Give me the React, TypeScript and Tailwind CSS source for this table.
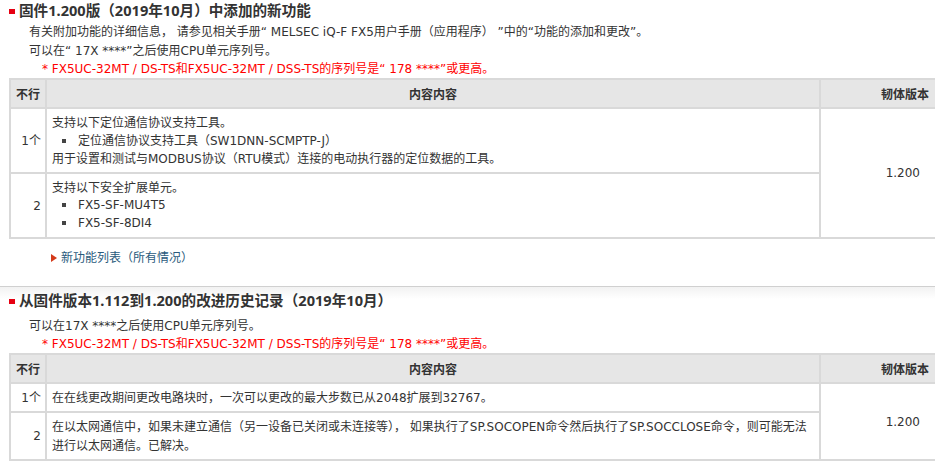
import React from "react";

const font = { fontFamily: '"DejaVu Sans", "Noto Sans CJK SC", sans-serif' };
const cjk = { fontFamily: '"Noto Sans CJK SC", sans-serif' };
const headFont = { fontFamily: '"Noto Sans", "Noto Sans CJK SC", sans-serif' };

function Heading({ children }: { children: React.ReactNode }) {
  return (
    <div className="flex items-center h-[21px] pl-[9px] overflow-visible" style={headFont}>
      <span className="w-[6px] h-[5px] bg-[#e60012] mr-[4px] mt-[2px]" />
      <span className="text-[14.6px] font-bold text-[#333] leading-[21px]">{children}</span>
    </div>
  );
}

function Line({ h, className = "", children }: { h: string; className?: string; children: React.ReactNode }) {
  return <div className={`${h} flex items-center whitespace-nowrap ${className}`}>{children}</div>;
}

function Bullet({ children }: { children: React.ReactNode }) {
  return (
    <div className="flex items-center h-[18px] pl-[10px]">
      <span className="w-[4px] h-[4px] bg-[#444] mr-[12px]" />
      <span>{children}</span>
    </div>
  );
}

function HeaderRow() {
  return (
    <tr className="bg-[#e6e6e6] h-[29px]">
      <th className="border-2 border-[#d9d9d9] text-left pl-[5px] w-[36px] font-bold" style={cjk}>不行</th>
      <th className="border-2 border-[#d9d9d9] text-center font-bold" style={cjk}>内容内容</th>
      <th className="border-2 border-[#d9d9d9] text-right pr-[8px] w-[118px] font-bold" style={cjk}>韧体版本</th>
    </tr>
  );
}

export default function App() {
  return (
    <div className="w-[935px] h-[461px] overflow-hidden bg-white text-[12px] text-[#333]" style={font}>
      <Heading>固件1.200版（2019年10月）中添加的新功能</Heading>
      <div className="h-[1px]" />
      <div className="pl-[29px]">
        <Line h="h-[19px]">有关附加功能的详细信息， 请参见相关手册“ MELSEC iQ-F FX5用户手册（应用程序） ”中的“功能的添加和更改”。</Line>
        <Line h="h-[19px]">可以在“ 17X ****”之后使用CPU单元序列号。</Line>
      </div>
      <Line h="h-[18px]" className="pl-[42px] text-[#ff0000]">
        * FX5UC-32MT / DS-TS和FX5UC-32MT / DSS-TS的序列号是“ 178 ****”或更高。
      </Line>
      <table className="ml-[9px] w-[930px] border-collapse text-[12px] leading-[18px]">
        <thead>
          <HeaderRow />
        </thead>
        <tbody>
          <tr className="h-[65px]">
            <td className="border-2 border-[#d9d9d9] text-right pr-[4px]">1个</td>
            <td className="border-2 border-[#d9d9d9] pl-[5px] py-[4px]">
              <Line h="h-[18px]">支持以下定位通信协议支持工具。</Line>
              <Bullet>定位通信协议支持工具（SW1DNN-SCMPTP-J）</Bullet>
              <Line h="h-[18px]">用于设置和测试与MODBUS协议（RTU模式）连接的电动执行器的定位数据的工具。</Line>
            </td>
            <td rowSpan={2} className="border-2 border-[#d9d9d9] text-right pr-[17px]">1.200</td>
          </tr>
          <tr className="h-[65px]">
            <td className="border-2 border-[#d9d9d9] text-right pr-[4px]">2</td>
            <td className="border-2 border-[#d9d9d9] pl-[5px] py-[4px]">
              <Line h="h-[17px]">支持以下安全扩展单元。</Line>
              <Bullet>FX5-SF-MU4T5</Bullet>
              <Bullet>FX5-SF-8DI4</Bullet>
            </td>
          </tr>
        </tbody>
      </table>
      <div className="flex items-center pl-[51px] h-[38px] text-[#2a5a7c]">
        <span className="w-0 h-0 border-y-[4px] border-y-transparent border-l-[6px] border-l-[#d43a1a] mr-[4px]" />
        <span>新功能列表（所有情况）</span>
      </div>
      <div className="h-[9px]" />
      <div className="border-t border-[#d0d0d0] bg-gradient-to-b from-[#f2f2f2] to-white to-[12px] pt-[3px]">
        <Heading>从固件版本1.112到1.200的改进历史记录（2019年10月）</Heading>
      </div>
      <div className="h-[5px]" />
      <Line h="h-[19px]" className="pl-[29px]">可以在17X ****之后使用CPU单元序列号。</Line>
      <Line h="h-[18px]" className="pl-[42px] text-[#ff0000]">
        * FX5UC-32MT / DS-TS和FX5UC-32MT / DSS-TS的序列号是“ 178 ****”或更高。
      </Line>
      <table className="ml-[9px] w-[930px] border-collapse text-[12px] leading-[18px]">
        <thead>
          <HeaderRow />
        </thead>
        <tbody>
          <tr className="h-[29px]">
            <td className="border-2 border-[#d9d9d9] text-right pr-[4px]">1个</td>
            <td className="border-2 border-[#d9d9d9] pl-[5px]">在在线更改期间更改电路块时，一次可以更改的最大步数已从2048扩展到32767。</td>
            <td rowSpan={2} className="border-2 border-[#d9d9d9] text-right pr-[17px]">1.200</td>
          </tr>
          <tr className="h-[47px]">
            <td className="border-2 border-[#d9d9d9] text-right pr-[4px]">2</td>
            <td className="border-2 border-[#d9d9d9] pl-[5px] pr-[4px] py-[4px]">
              <Line h="h-[19px]">在以太网通信中，如果未建立通信（另一设备已关闭或未连接等）， 如果执行了SP.SOCOPEN命令然后执行了SP.SOCCLOSE命令，则可能无法</Line>
              <Line h="h-[19px]">进行以太网通信。已解决。</Line>
            </td>
          </tr>
        </tbody>
      </table>
    </div>
  );
}
